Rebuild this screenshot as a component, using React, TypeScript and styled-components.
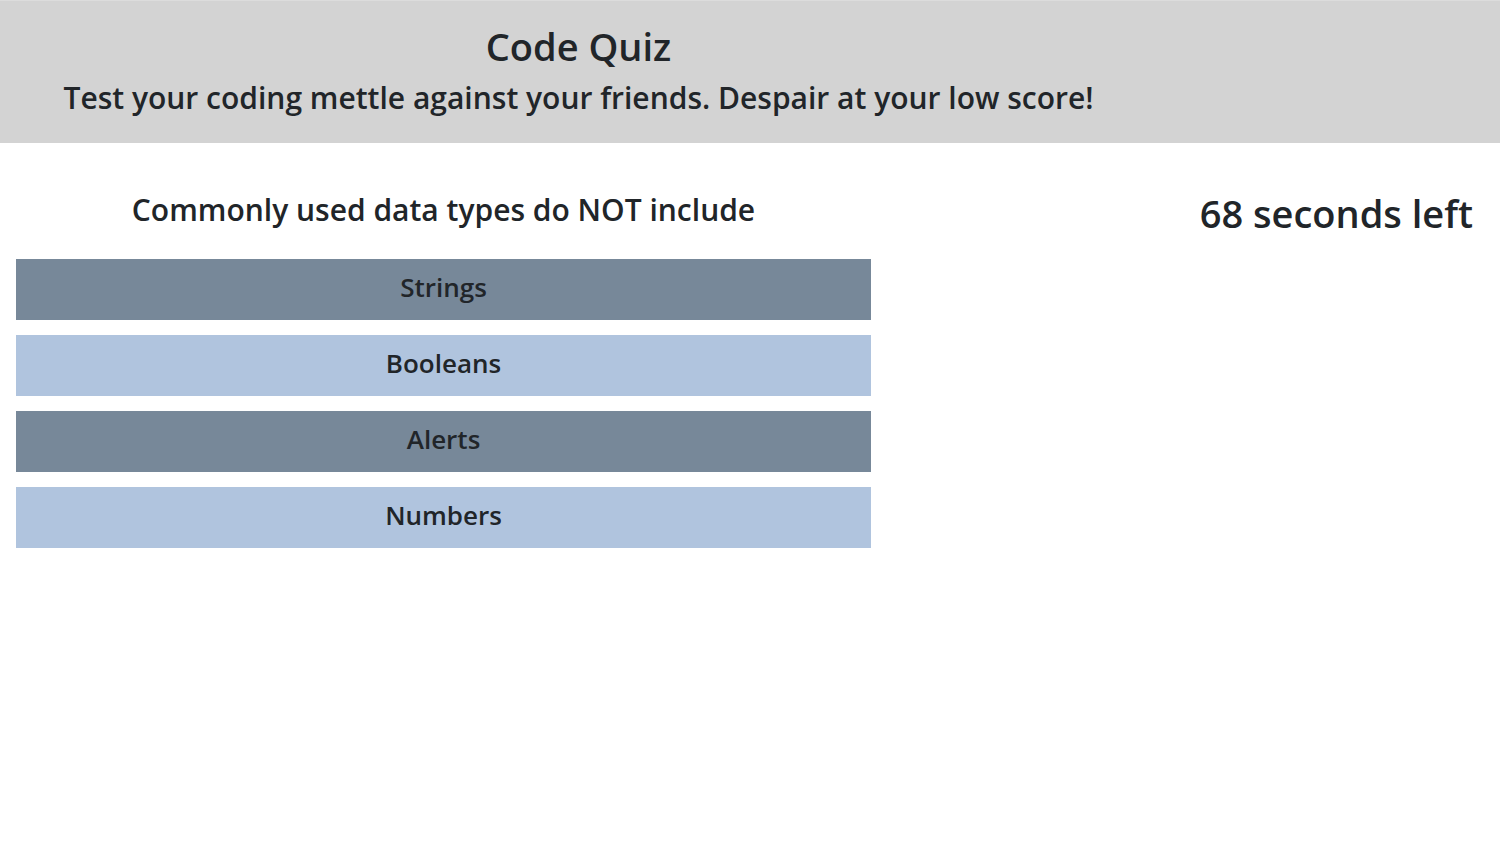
import React, { useState } from "react";
import styled, { createGlobalStyle } from "styled-components";

const GlobalStyle = createGlobalStyle`
  *, *::before, *::after { box-sizing: border-box; }
  body {
    margin: 0;
    background: #fff;
    color: #212529;
    font-family: "Segoe UI", "Open Sans", "Noto Sans", sans-serif;
    font-weight: 600;
  }
  h1, h2, p { margin: 0; font-weight: inherit; }
`;

const Banner = styled.header`
  padding: 22px 0 24px;
  background: #d3d3d3;
  border-top: 1px solid #dcdcdc;
`;

const BannerText = styled.div`
  width: 75%;
  margin-left: 16px;
  text-align: center;
`;

const Title = styled.h1`
  margin-bottom: 8px;
  font-size: 38px;
  line-height: 46px;
`;

const Tagline = styled.p`
  font-size: 30px;
  line-height: 42px;
`;

const Board = styled.main`
  display: flex;
  justify-content: space-between;
  align-items: flex-start;
`;

const Quiz = styled.section`
  width: 57%;
  margin-left: 16px;
  padding-top: 46px;
  text-align: center;
`;

const Question = styled.h2`
  margin-bottom: 28px;
  font-size: 30px;
  line-height: 42px;
`;

const Answers = styled.div`
  display: grid;
  gap: 15px;
`;

const Answer = styled.button<{ $tone: "slate" | "steel" }>`
  height: 61px;
  padding: 0 0 6px;
  border: 0;
  background: ${({ $tone }) => ($tone === "slate" ? "#778899" : "#b0c4de")};
  color: inherit;
  font: inherit;
  font-size: 26px;
  cursor: pointer;
`;

const Timer = styled.p`
  margin-right: 27px;
  padding-top: 46px;
  font-size: 38px;
  line-height: 48px;
`;

const answers = ["Strings", "Booleans", "Alerts", "Numbers"];

export default function App() {
  const [, setChoice] = useState<string | null>(null);
  return (
    <>
      <GlobalStyle />
      <Banner>
        <BannerText>
          <Title>Code Quiz</Title>
          <Tagline>Test your coding mettle against your friends. Despair at your low score!</Tagline>
        </BannerText>
      </Banner>
      <Board>
        <Quiz>
          <Question>Commonly used data types do NOT include</Question>
          <Answers>
            {answers.map((answer, i) => (
              <Answer key={answer} type="button" $tone={i % 2 ? "steel" : "slate"} onClick={() => setChoice(answer)}>
                {answer}
              </Answer>
            ))}
          </Answers>
        </Quiz>
        <Timer>68 seconds left</Timer>
      </Board>
    </>
  );
}
